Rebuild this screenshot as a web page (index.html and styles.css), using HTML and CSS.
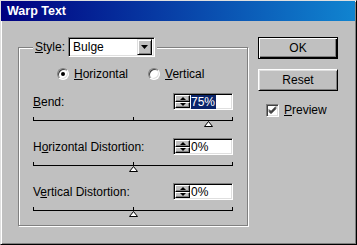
FILE: index.html
```html
<!DOCTYPE html>
<html lang="en">
<head>
    <meta charset="UTF-8">
    <meta name="viewport" content="width=device-width, initial-scale=1.0">
    <title>Warp Text</title>
    <link rel="stylesheet" href="styles.css">
</head>
<body>
    <div class="window">
        <div class="titlebar">Warp Text</div>

        <div class="dialog">
            <fieldset class="group">
                <legend class="group-legend">
                    <span class="style-label"><u>S</u>tyle:</span>
                    <div class="combo">
                        <span class="combo-value">Bulge</span>
                        <span class="combo-btn">
                            <svg width="7" height="4" viewBox="0 0 7 4"><polygon points="0,0 7,0 3.5,4" fill="#000"/></svg>
                        </span>
                    </div>
                </legend>

                <div class="radios">
                    <label class="radio"><span class="radio-dot checked"></span><span><u>H</u>orizontal</span></label>
                    <label class="radio"><span class="radio-dot"></span><span><u>V</u>ertical</span></label>
                </div>

                <div class="param">
                    <div class="param-row">
                        <span><u>B</u>end:</span>
                        <div class="spin">
                            <div class="spin-btns">
                                <span class="spin-btn"><i class="arrow-up"></i></span>
                                <span class="spin-btn"><i class="arrow-down"></i></span>
                            </div>
                            <span class="spin-field"><span class="selected">75%</span></span>
                        </div>
                    </div>
                    <div class="slider">
                        <span class="tick-mid"></span>
                        <svg class="thumb" style="left: 87.5%" width="9" height="6" viewBox="0 0 9 6"><polygon points="4.5,0.5 8.5,5.5 0.5,5.5" fill="#fff" stroke="#000"/></svg>
                    </div>
                </div>

                <div class="param">
                    <div class="param-row">
                        <span>H<u>o</u>rizontal Distortion:</span>
                        <div class="spin">
                            <div class="spin-btns">
                                <span class="spin-btn"><i class="arrow-up"></i></span>
                                <span class="spin-btn"><i class="arrow-down"></i></span>
                            </div>
                            <span class="spin-field">0%</span>
                        </div>
                    </div>
                    <div class="slider">
                        <span class="tick-mid"></span>
                        <svg class="thumb" style="left: 50%" width="9" height="6" viewBox="0 0 9 6"><polygon points="4.5,0.5 8.5,5.5 0.5,5.5" fill="#fff" stroke="#000"/></svg>
                    </div>
                </div>

                <div class="param">
                    <div class="param-row">
                        <span>V<u>e</u>rtical Distortion:</span>
                        <div class="spin">
                            <div class="spin-btns">
                                <span class="spin-btn"><i class="arrow-up"></i></span>
                                <span class="spin-btn"><i class="arrow-down"></i></span>
                            </div>
                            <span class="spin-field">0%</span>
                        </div>
                    </div>
                    <div class="slider">
                        <span class="tick-mid"></span>
                        <svg class="thumb" style="left: 50%" width="9" height="6" viewBox="0 0 9 6"><polygon points="4.5,0.5 8.5,5.5 0.5,5.5" fill="#fff" stroke="#000"/></svg>
                    </div>
                </div>
            </fieldset>

            <div class="buttons">
                <button class="btn btn-default">OK</button>
                <button class="btn">Reset</button>
                <label class="check">
                    <span class="check-box">
                        <svg width="9" height="9" viewBox="0 0 9 9"><path d="M1 3.5 L3 5.5 L8 0.5 M1 4.5 L3 6.5 L8 1.5 M1 5.5 L3 7.5 L8 2.5" stroke="#000" fill="none"/></svg>
                    </span>
                    <span><u>P</u>review</span>
                </label>
            </div>
        </div>
    </div>
</body>
</html>
```

FILE: styles.css
```css
* {
    box-sizing: border-box;
    margin: 0;
    padding: 0;
}

body {
    font-family: 'Liberation Sans', Arial, sans-serif;
    font-size: 12px;
    color: #000;
    background-color: #c0c0c0;
}

u {
    text-decoration: underline;
    text-underline-offset: 1px;
}

.window {
    width: 357px;
    height: 245px;
    background-color: #c0c0c0;
    border: 1px solid;
    border-color: #dfdfdf #000 #000 #dfdfdf;
    box-shadow: inset 1px 1px #fff, inset -1px -1px #808080;
}

.titlebar {
    height: 20px;
    margin-right: 1px;
    padding-left: 6px;
    line-height: 20px;
    font-size: 12.5px;
    font-weight: bold;
    color: #fff;
    background: linear-gradient(to right, #000080, #1084d0);
}

.dialog {
    display: flex;
    align-items: flex-start;
    padding: 16px 0 0 17px;
}

/* group box */
.group {
    width: 230px;
    border: 1px solid #808080;
    box-shadow: inset 1px 1px #fff, 1px 1px #fff;
    padding: 10px 14px 6px;
}

.group-legend {
    display: flex;
    align-items: center;
    gap: 3px;
    padding: 0 2px;
    background-color: #c0c0c0;
}

.combo {
    display: flex;
    align-items: center;
    width: 87px;
    height: 20px;
    background-color: #fff;
    border: 1px solid;
    border-color: #808080 #fff #fff #808080;
    box-shadow: inset 1px 1px #000, inset -1px -1px #dfdfdf;
    padding: 2px;
}

.combo-value {
    flex: 1;
    padding-left: 2px;
}

.combo-btn {
    display: flex;
    align-items: center;
    justify-content: center;
    width: 15px;
    height: 16px;
    background-color: #c0c0c0;
    border: 1px solid;
    border-color: #dfdfdf #000 #000 #dfdfdf;
    box-shadow: inset 1px 1px #fff, inset -1px -1px #808080;
}

/* radios */
.radios {
    display: flex;
    align-items: center;
    gap: 20px;
    height: 14px;
    padding-left: 24px;
    margin-bottom: 12px;
}

.radio {
    display: flex;
    align-items: center;
    gap: 5px;
}

.radio-dot {
    position: relative;
    width: 12px;
    height: 12px;
    border-radius: 50%;
    background-color: #fff;
    border: 1px solid;
    border-color: #808080 #fff #fff #808080;
    box-shadow: inset 1px 1px #404040, inset -1px -1px #dfdfdf;
}

.radio-dot.checked::after {
    content: '';
    position: absolute;
    left: 3px;
    top: 3px;
    width: 4px;
    height: 4px;
    border-radius: 50%;
    background-color: #000;
}

/* parameter rows */
.param-row {
    display: flex;
    align-items: center;
    justify-content: space-between;
    height: 17px;
}

.spin {
    display: flex;
    width: 60px;
    height: 17px;
    background-color: #fff;
    border: 1px solid;
    border-color: #808080 #fff #fff #808080;
    box-shadow: inset 1px 1px #000, inset -1px -1px #dfdfdf;
    padding: 1px;
}

.spin-btns {
    display: flex;
    flex-direction: column;
    width: 15px;
}

.spin-btn {
    flex: 1;
    display: flex;
    align-items: center;
    justify-content: center;
    background-color: #c0c0c0;
    border: 1px solid;
    border-color: #fff #000 #000 #fff;
    box-shadow: inset -1px -1px #808080;
}

.arrow-up,
.arrow-down {
    width: 0;
    height: 0;
    border-left: 3px solid transparent;
    border-right: 3px solid transparent;
}

.arrow-up {
    border-bottom: 3px solid #000;
}

.arrow-down {
    border-top: 3px solid #000;
}

.spin-field {
    flex: 1;
    display: flex;
    align-items: center;
    padding-left: 1px;
}

.selected {
    background-color: #0a246a;
    color: #fff;
    padding-right: 1px;
}

/* sliders */
.slider {
    position: relative;
    height: 9px;
    border-top: 1px solid #000;
    margin: 10px 0 9px;
}

.param:last-child .slider {
    margin-bottom: 0;
}

.slider::before,
.slider::after,
.tick-mid {
    content: '';
    position: absolute;
    top: -4px;
    width: 1px;
    height: 3px;
    background-color: #000;
}

.slider::before {
    left: 0;
}

.slider::after {
    right: 0;
}

.tick-mid {
    left: 50%;
}

.thumb {
    position: absolute;
    top: 0;
    margin-left: -4px;
    display: block;
}

/* buttons */
.buttons {
    display: flex;
    flex-direction: column;
    width: 80px;
    margin-left: 10px;
}

.btn {
    width: 80px;
    height: 22px;
    font: inherit;
    color: #000;
    background-color: #c0c0c0;
    border: 1px solid;
    border-color: #fff #000 #000 #fff;
    box-shadow: inset 1px 1px #dfdfdf, inset -1px -1px #808080;
}

.btn + .btn {
    margin-top: 10px;
}

.btn-default {
    border: 1px solid #000;
    box-shadow: inset 1px 1px #fff, inset -1px -1px #000, inset -2px -2px #808080;
}

.check {
    display: flex;
    align-items: center;
    gap: 5px;
    margin-top: 12px;
    padding-left: 8px;
}

.check-box {
    display: flex;
    align-items: center;
    justify-content: center;
    width: 13px;
    height: 13px;
    background-color: #fff;
    border: 1px solid;
    border-color: #808080 #fff #fff #808080;
    box-shadow: inset 1px 1px #404040, inset -1px -1px #dfdfdf;
}
```
